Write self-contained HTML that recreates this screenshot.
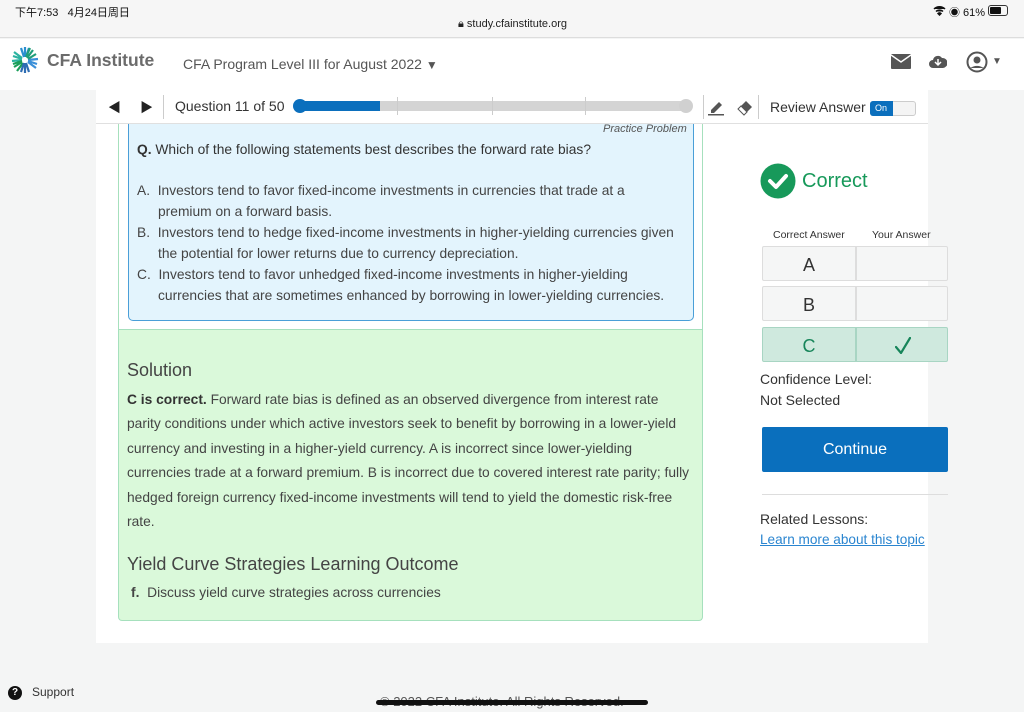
<!DOCTYPE html>
<html><head><meta charset="utf-8"><style>
*{margin:0;padding:0;box-sizing:border-box}
body{width:1024px;height:712px;overflow:hidden;background:#f4f5f5;font-family:"Liberation Sans",Arial,"Noto Sans CJK SC",sans-serif;color:#333;position:relative}
.a{position:absolute;white-space:nowrap}
</style></head><body>
<div class="a" style="left:0;top:0;width:1024px;height:38px;background:#f6f6f6;border-bottom:1px solid #ddd"></div>
<div class="a" style="left:15px;top:4px;font-size:11px;color:#111;font-family:'Liberation Sans','Noto Sans CJK SC',sans-serif">下午7:53&nbsp;&nbsp;&nbsp;4月24日周日</div>
<div class="a" style="left:458px;top:18px;font-size:11px;color:#222">🔒︎ study.cfainstitute.org</div>
<svg class="a" style="left:933px;top:5px" width="13" height="11"><path d="M1 4a8 8 0 0 1 11 0M3 6.5a5 5 0 0 1 7 0M6.5 10l-1.5-1.5a2 2 0 0 1 3 0z" stroke="#111" stroke-width="1.5" fill="#111"/></svg>
<div class="a" style="left:949px;top:4px;font-size:11px;color:#111">◉ 61%</div>
<div class="a" style="left:988px;top:5px;width:20px;height:11px;border:1px solid #333;border-radius:3px"><div style="width:11px;height:7px;margin:1px;background:#111;border-radius:1px"></div></div>
<div class="a" style="left:0;top:39px;width:1024px;height:51px;background:#fff"></div>
<svg class="a" style="left:9px;top:44px" width="32" height="32" viewBox="0 0 32 32">
<g stroke-width="2.2" fill="none">
<path d="M16 3v10M12 4l3 9M20 4l-3 9" stroke="#2a8fd0"/>
<path d="M4 12l9 3M3 17l10-1M5 8l8 6" stroke="#2bb3a0"/>
<path d="M5 23l8-5M8 27l6-8M4 20l9-3" stroke="#1b9e5a"/>
<path d="M16 29v-10M20 28l-3-9M12 28l3-9" stroke="#2f6db3"/>
<path d="M28 20l-9-3M27 24l-8-6M29 15l-10 1" stroke="#3a8fd8"/>
<path d="M24 6l-6 8M27 10l-8 5M21 4l-4 9" stroke="#1f9e7a"/>
</g></svg>
<div class="a" style="left:47px;top:50px;font-size:17.5px;font-weight:bold;color:#6b6b6b">CFA Institute</div>
<div class="a" style="left:183px;top:56px;font-size:14px;color:#555">CFA Program Level III for August 2022 <span style="font-size:12px">▼</span></div>
<svg class="a" style="left:891px;top:54px" width="20" height="15"><rect width="20" height="15" rx="1" fill="#555"/><path d="M0 1l10 7 10-7" stroke="#fff" stroke-width="1.5" fill="none"/></svg>
<svg class="a" style="left:929px;top:54px" width="18" height="14"><path d="M4 14a4 4 0 0 1 0-8a5 5 0 0 1 9-2a4 4 0 0 1 1 10z" fill="#555"/><path d="M9 5v6M6 8l3 3 3-3" stroke="#fff" stroke-width="1.5" fill="none"/></svg>
<svg class="a" style="left:966px;top:51px" width="22" height="22"><circle cx="11" cy="11" r="9.5" stroke="#555" stroke-width="2" fill="none"/><circle cx="11" cy="9" r="3.5" fill="#555"/><path d="M4.5 17a8 5 0 0 1 13 0" fill="#555"/></svg>
<div class="a" style="left:992px;top:56px;font-size:10px;color:#555">▼</div>

<div class="a" style="left:96px;top:90px;width:832px;height:553px;background:#fff"></div>
<div class="a" style="left:96px;top:123px;width:832px;height:1px;background:#e0e0e0"></div>
<div class="a" style="left:108px;top:97px;font-size:13px;color:#222">◀</div>
<div class="a" style="left:140px;top:97px;font-size:13px;color:#222">▶</div>
<div class="a" style="left:163px;top:95px;width:1px;height:24px;background:#ccc"></div>
<div class="a" style="left:175px;top:98px;font-size:14px;color:#333">Question 11 of 50</div>
<div class="a" style="left:300px;top:101px;width:390px;height:10px;background:#d4d4d4;border-radius:5px"></div>
<div class="a" style="left:300px;top:101px;width:80px;height:10px;background:#0b6fbd;border-radius:5px 0 0 5px"></div>
<div class="a" style="left:293px;top:99px;width:14px;height:14px;background:#0b6fbd;border-radius:50%"></div>
<div class="a" style="left:679px;top:99px;width:14px;height:14px;background:#d0d0d0;border-radius:50%"></div>
<div class="a" style="left:397px;top:97px;width:1px;height:18px;background:#ccc"></div>
<div class="a" style="left:492px;top:97px;width:1px;height:18px;background:#ccc"></div>
<div class="a" style="left:585px;top:97px;width:1px;height:18px;background:#ccc"></div>
<div class="a" style="left:703px;top:95px;width:1px;height:24px;background:#ccc"></div>
<svg class="a" style="left:707px;top:98px" width="18" height="18"><path d="M4 12l8-8 3 3-8 8H4z" fill="#555"/><rect x="1" y="16" width="16" height="1.5" fill="#555"/></svg>
<svg class="a" style="left:736px;top:98px" width="18" height="18"><path d="M2 11l8-8 6 6-8 8z" fill="#555"/><path d="M2 11l3-3 6 6-3 3z" fill="#fff" stroke="#555"/></svg>
<div class="a" style="left:758px;top:95px;width:1px;height:24px;background:#ccc"></div>
<div class="a" style="left:770px;top:99px;font-size:14px;color:#333">Review Answer</div>
<div class="a" style="left:870px;top:101px;width:46px;height:15px;border:1px solid #ccc;border-radius:3px;background:#f4f4f4"></div>
<div class="a" style="left:870px;top:101px;width:23px;height:15px;background:#0b6fbd;border-radius:3px 0 0 3px;color:#fff;font-size:9px;padding:2px 0 0 5px">On</div>

<div class="a" style="left:118px;top:124px;width:585px;height:497px;border:1px solid #a6e0bd;border-top:none;border-radius:0 0 4px 4px;background:#daf9da"></div>
<div class="a" style="left:119px;top:124px;width:583px;height:206px;background:#fff;border-bottom:1px solid #a6e0bd"></div>
<div class="a" style="left:128px;top:124px;width:566px;height:197px;background:#e3f4fd;border:1px solid #4a9fd8;border-top:none;border-radius:0 0 5px 5px"></div>
<div class="a" style="left:603px;top:123px;font-size:11px;font-style:italic;color:#555">Practice Problem</div>
<div class="a" style="left:137px;top:142px;font-size:13.8px;color:#333"><b>Q.</b> Which of the following statements best describes the forward rate bias?</div>
<div class="a" style="left:137px;top:180px;font-size:13.8px;line-height:21px;color:#444">
<div>A.&nbsp;&nbsp;Investors tend to favor fixed-income investments in currencies that trade at a</div>
<div style="padding-left:21px">premium on a forward basis.</div>
<div>B.&nbsp;&nbsp;Investors tend to hedge fixed-income investments in higher-yielding currencies given</div>
<div style="padding-left:21px">the potential for lower returns due to currency depreciation.</div>
<div>C.&nbsp;&nbsp;Investors tend to favor unhedged fixed-income investments in higher-yielding</div>
<div style="padding-left:21px">currencies that are sometimes enhanced by borrowing in lower-yielding currencies.</div>
</div>
<div class="a" style="left:127px;top:360px;font-size:18px;color:#444">Solution</div>
<div class="a" style="left:127px;top:388px;font-size:13.8px;line-height:24.4px;color:#444">
<div><b style="color:#333">C is correct.</b> Forward rate bias is defined as an observed divergence from interest rate</div>
<div>parity conditions under which active investors seek to benefit by borrowing in a lower-yield</div>
<div>currency and investing in a higher-yield currency. A is incorrect since lower-yielding</div>
<div>currencies trade at a forward premium. B is incorrect due to covered interest rate parity; fully</div>
<div>hedged foreign currency fixed-income investments will tend to yield the domestic risk-free</div>
<div>rate.</div>
</div>
<div class="a" style="left:127px;top:554px;font-size:18px;color:#444">Yield Curve Strategies Learning Outcome</div>
<div class="a" style="left:131px;top:585px;font-size:13.8px;color:#444"><b>f.</b>&nbsp; Discuss yield curve strategies across currencies</div>

<svg class="a" style="left:760px;top:163px" width="36" height="36"><circle cx="18" cy="18" r="17.5" fill="#17995a"/><path d="M10 18l6 6 10-11" stroke="#fff" stroke-width="4" fill="none" stroke-linecap="round" stroke-linejoin="round"/></svg>
<div class="a" style="left:802px;top:170px;font-size:20px;color:#17995a">Correct</div>
<div class="a" style="left:773px;top:229px;font-size:10.5px;color:#333">Correct Answer</div>
<div class="a" style="left:872px;top:229px;font-size:10.5px;color:#333">Your Answer</div>
<div class="a" style="left:762px;top:246px;width:186px;height:35px;border:1px solid #ddd;border-radius:2px;background:#f5f6f6"><div style="position:absolute;left:92px;top:0;width:2px;height:33px;background:#ddd"></div><div style="position:absolute;left:0;width:92px;text-align:center;top:8px;font-size:18px">A</div></div>
<div class="a" style="left:762px;top:286px;width:186px;height:35px;border:1px solid #ddd;border-radius:2px;background:#f5f6f6"><div style="position:absolute;left:92px;top:0;width:2px;height:33px;background:#ddd"></div><div style="position:absolute;left:0;width:92px;text-align:center;top:8px;font-size:18px">B</div></div>
<div class="a" style="left:762px;top:327px;width:186px;height:35px;border:1px solid #a8d5c3;border-radius:2px;background:#cfe9de"><div style="position:absolute;left:92px;top:0;width:2px;height:33px;background:#a8d5c3"></div><div style="position:absolute;left:0;width:92px;text-align:center;top:8px;font-size:18px;color:#17855a">C</div>
<svg style="position:absolute;left:132px;top:9px" width="16" height="17"><path d="M1 10l5 6L15 1" stroke="#17855a" stroke-width="2.2" fill="none" stroke-linecap="round"/></svg></div>
<div class="a" style="left:760px;top:371px;font-size:14px;color:#333">Confidence Level:</div>
<div class="a" style="left:760px;top:392px;font-size:14px;color:#333">Not Selected</div>
<div class="a" style="left:762px;top:427px;width:186px;height:45px;background:#0a6fbd;border-radius:2px;color:#fff;font-size:16px;text-align:center;line-height:45px">Continue</div>
<div class="a" style="left:762px;top:494px;width:186px;height:1px;background:#ddd"></div>
<div class="a" style="left:760px;top:511px;font-size:14px;color:#333">Related Lessons:</div>
<div class="a" style="left:760px;top:532px;font-size:13.6px;color:#2a85d0;text-decoration:underline">Learn more about this topic</div>

<div class="a" style="left:8px;top:686px;width:14px;height:14px;border-radius:50%;background:#111;color:#fff;font-size:10px;font-weight:bold;text-align:center;line-height:14px">?</div>
<div class="a" style="left:32px;top:685px;font-size:12px;color:#333">Support</div>
<div class="a" style="left:380px;top:694px;font-size:13px;color:#555">© 2022 CFA Institute. All Rights Reserved.</div>
<div class="a" style="left:376px;top:700px;width:272px;height:5px;background:#111;border-radius:3px"></div>
</body></html>
